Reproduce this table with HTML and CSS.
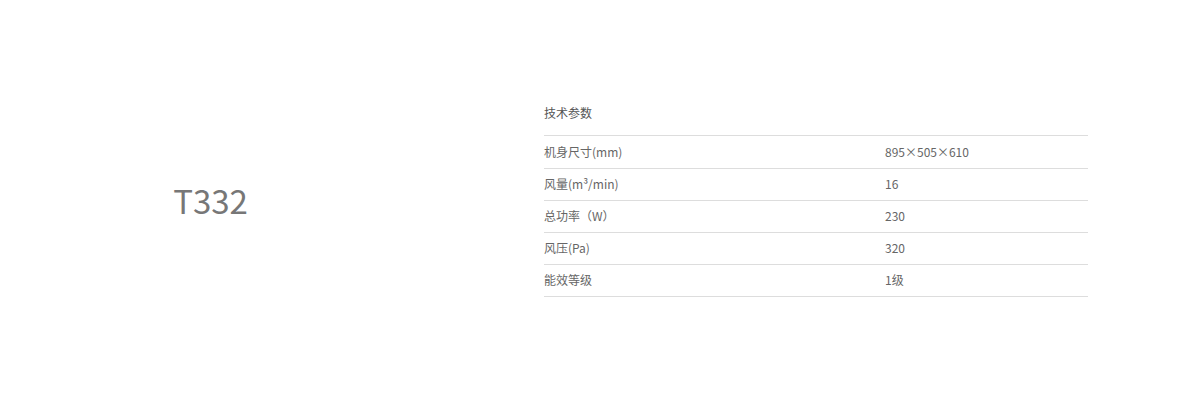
FILE: index.html
```html
<!DOCTYPE html>
<html lang="zh-CN">
<head>
<meta charset="utf-8">
<title>T332</title>
<link rel="stylesheet" href="styles.css">
</head>
<body>
<main class="page">
  <section class="model">
    <h1 class="model-name">T332</h1>
  </section>
  <section class="specs">
    <h2 class="specs-title">技术参数</h2>
    <div class="spec-row"><span class="spec-label">机身尺寸(mm)</span><span class="spec-value">895×505×610</span></div>
    <div class="spec-row"><span class="spec-label">风量(m³/min)</span><span class="spec-value">16</span></div>
    <div class="spec-row"><span class="spec-label">总功率（W）</span><span class="spec-value">230</span></div>
    <div class="spec-row"><span class="spec-label">风压(Pa)</span><span class="spec-value">320</span></div>
    <div class="spec-row"><span class="spec-label">能效等级</span><span class="spec-value">1级</span></div>
  </section>
</main>
</body>
</html>
```

FILE: styles.css
```css
* { box-sizing: border-box; }
html, body {
  margin: 0;
  padding: 0;
  background: #fff;
}
body {
  font-family: "Noto Sans CJK SC", "Noto Sans", sans-serif;
  color: #666;
}
.page {
  width: 1190px;
  height: 404px;
  display: flex;
  align-items: flex-start;
  padding-top: 100px;
}
.model {
  width: 421px;
  text-align: center;
  padding-top: 76px;
}
.model-name {
  margin: 0;
  font-size: 33px;
  font-weight: 400;
  line-height: 48px;
  color: #777;
}
.specs {
  margin-left: 123px;
  width: 544px;
}
.specs-title {
  margin: 0;
  font-size: 12px;
  font-weight: 400;
  color: #555;
  line-height: 26px;
  height: 36px;
  border-bottom: 1px solid #ddd;
}
.spec-row {
  display: flex;
  align-items: center;
  height: 32px;
  padding-bottom: 2px;
  border-bottom: 1px solid #ddd;
  font-size: 12px;
  font-weight: 400;
  color: #666;
}
.spec-row:first-of-type {
  height: 33px;
  padding-bottom: 1px;
}
.spec-label {
  width: 341px;
}
.spec-value {
  flex: 1;
}
```
